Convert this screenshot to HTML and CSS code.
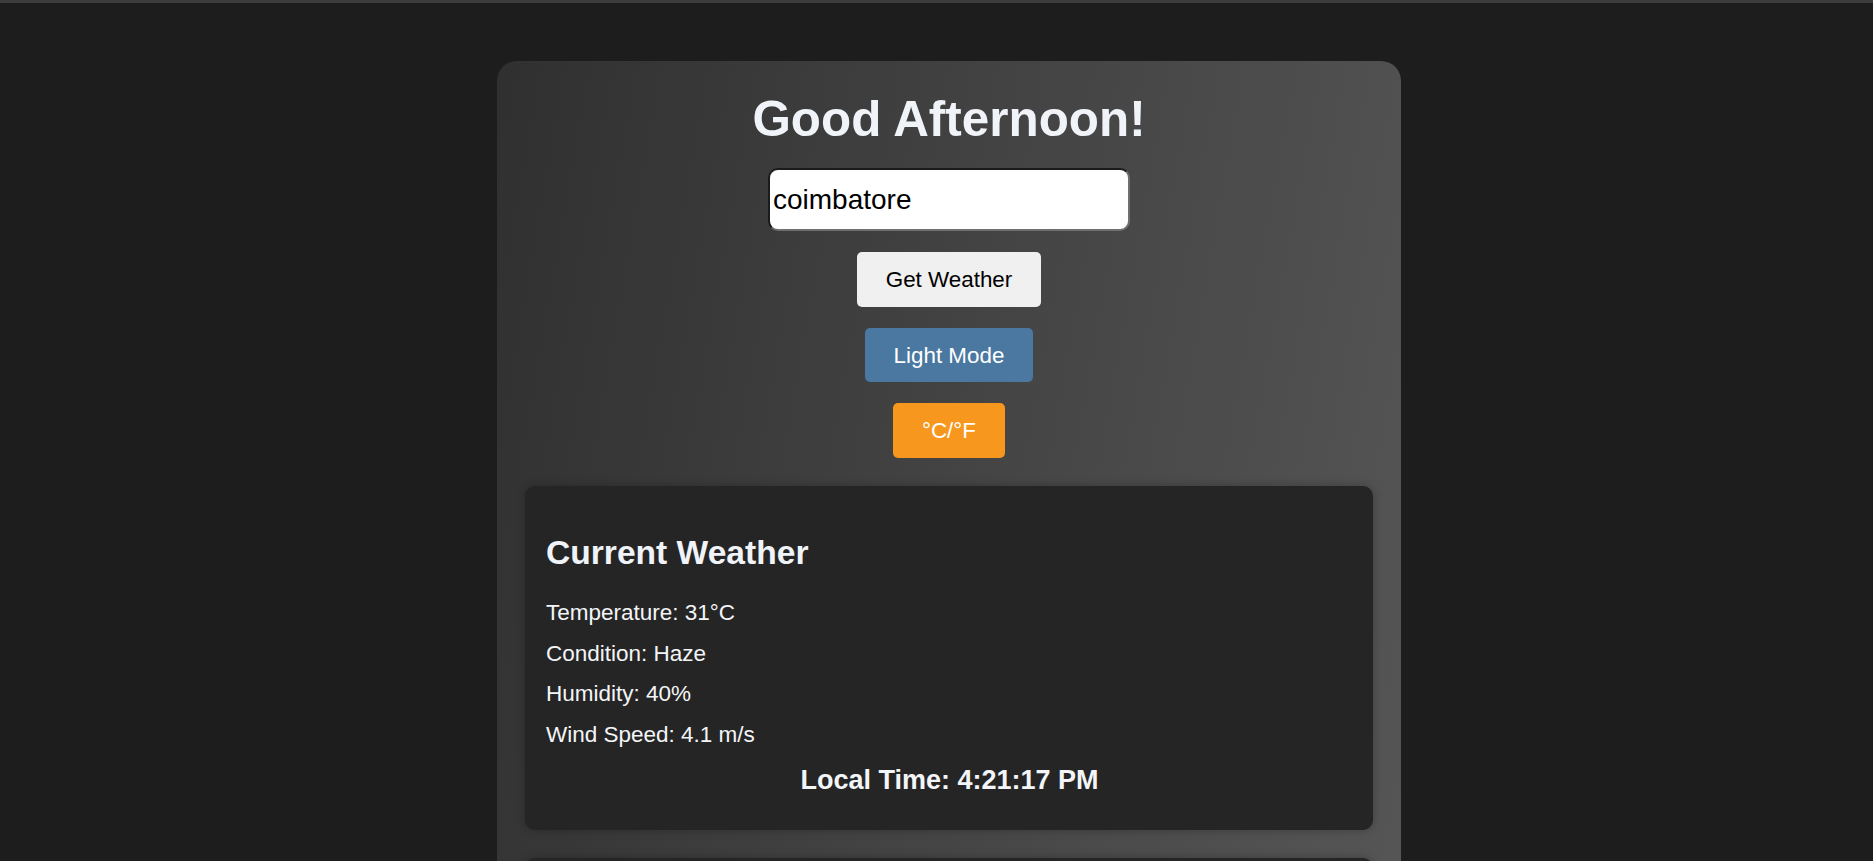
FILE: index.html
```html
<!DOCTYPE html>
<html lang="en">
<head>
<meta charset="utf-8">
<title>Weather App</title>
<link rel="stylesheet" href="styles.css">
</head>
<body>
<div class="topbar"></div>
<div class="page">
  <main class="app">
    <h1 class="greeting">Good Afternoon!</h1>
    <input class="city-input" type="text" value="coimbatore">
    <button class="btn btn-get">Get Weather</button>
    <button class="btn btn-mode">Light Mode</button>
    <button class="btn btn-unit">°C/°F</button>
    <section class="panel current">
      <h2 class="panel-title">Current Weather</h2>
      <p class="stat">Temperature: 31°C</p>
      <p class="stat">Condition: Haze</p>
      <p class="stat">Humidity: 40%</p>
      <p class="stat">Wind Speed: 4.1 m/s</p>
      <p class="local-time">Local Time: 4:21:17 PM</p>
    </section>
    <section class="panel forecast"></section>
  </main>
</div>
</body>
</html>
```

FILE: styles.css
```css
html, body {
  margin: 0;
  padding: 0;
  background: #1d1d1d;
  font-family: "Liberation Sans", Arial, sans-serif;
  overflow: hidden;
}

.topbar {
  height: 3px;
  background: #3c3c3c;
}

.page {
  display: flex;
  justify-content: center;
  padding: 58px 0 0 25px;
}

.app {
  width: 904px;
  box-sizing: border-box;
  padding: 30px 28px 28px;
  border-radius: 20px;
  background: linear-gradient(100deg, #303030 0%, #444 50%, #575757 100%);
  display: flex;
  flex-direction: column;
  align-items: center;
}

.greeting {
  margin: 0;
  font-size: 49.4px;
  line-height: 56px;
  font-weight: bold;
  color: #f0f3f8;
  text-align: center;
}

.city-input {
  margin-top: 21px;
  width: 362px;
  height: 63px;
  box-sizing: border-box;
  padding: 0 3px;
  font-family: "Liberation Sans", Arial, sans-serif;
  font-size: 28px;
  color: #000;
  background: #fff;
  border-style: solid;
  border-width: 2px;
  border-color: #1b1b1b #6f6f6f #6f6f6f #1b1b1b;
  border-radius: 10px;
  outline: none;
}

.btn {
  margin-top: 21px;
  padding: 15px 29px;
  font-family: "Liberation Sans", Arial, sans-serif;
  font-size: 22.4px;
  line-height: 25px;
  border: none;
  border-radius: 5px;
  cursor: pointer;
}

.btn-get {
  background: #f0f0f0;
  color: #000;
}

.btn-mode {
  background: #4a78a0;
  color: #fff;
  padding-top: 14.5px;
  padding-bottom: 14.5px;
}

.btn-unit {
  background: #f7971e;
  color: #fff;
}

.panel {
  align-self: stretch;
  margin-top: 28px;
  padding: 20px 20px 20px 21px;
  background: #252525;
  border-radius: 10px;
  box-shadow: 0 0 10px rgba(0, 0, 0, 0.25);
  color: #f3f5f8;
}

.forecast {
  min-height: 200px;
}

.panel-title {
  margin: 27.9px 0;
  font-size: 33.6px;
  font-weight: bold;
  color: #f0f3f8;
}

.stat {
  margin: 14.8px 0;
  font-size: 22.5px;
}

.local-time {
  margin: 16.5px 0 14.6px;
  font-size: 27px;
  font-weight: bold;
  text-align: center;
  color: #f3f5f8;
}
```
